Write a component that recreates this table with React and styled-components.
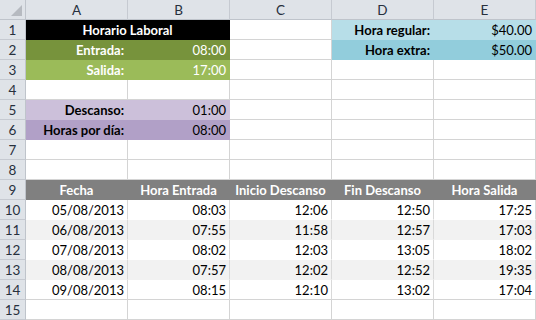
import styled, { createGlobalStyle } from "styled-components";

const GRID = '#d4d4d4';

const GlobalStyle = createGlobalStyle`
    html, body {
        margin: 0;
        padding: 0;
        background: #ffffff;
    }
    body {
        font-family: "Lato", "Open Sans", sans-serif;
        font-size: 13px;
        color: #000000;
    }
`;

const Sheet = styled.div`
    width: 536px;
    height: 320px;
    overflow: hidden;
    display: grid;
    grid-template-columns: 26px repeat(5, 102px);
    grid-auto-rows: 20px;
`;

const Corner = styled.div`
    position: relative;
    background: #dfe3e8;
    border-right: 1px solid #bfc4cb;
    border-bottom: 1px solid #bfc4cb;

    &::after{
        content: '';
        position: absolute;
        right: 3px;
        bottom: 3px;
        width: 0;
        height: 0;
        border-left: 11px solid transparent;
        border-bottom: 11px solid #b6bac0;
    }
`;

const ColHead = styled.div`
    display: flex;
    justify-content: center;
    align-items: center;
    background: #dfe3e8;
    border-right: 1px solid #c6cad1;
    border-bottom: 1px solid #bfc4cb;
    color: #27303d;
    font-size: 13.5px;
`;

const RowHead = styled.div`
    display: flex;
    justify-content: center;
    align-items: center;
    background: #dfe3e8;
    border-right: 1px solid #bfc4cb;
    border-bottom: 1px solid #c6cad1;
    color: #27303d;
    font-size: 13.5px;
`;

const Cell = styled.div`
    display: flex;
    align-items: center;
    justify-content: ${({ $align })=> $align === 'center' ? 'center' : $align === 'left' ? 'flex-start' : 'flex-end'};
    grid-column: span ${({ $span })=> $span || 1};
    padding: 0 3px;
    white-space: nowrap;
    overflow: hidden;
    background: ${({ $bg })=> $bg || '#ffffff'};
    color: ${({ $color })=> $color || '#000000'};
    font-weight: ${({ $bold })=> $bold ? 700 : 400};
    border-right: 1px solid ${({ $vline, $bg })=> $vline || $bg || GRID};
    border-bottom: 1px solid ${({ $hline, $bg })=> $hline || $bg || GRID};
`;

const COLS = ['A', 'B', 'C', 'D', 'E'];

const BLACK = '#000000';
const GREEN_DARK = '#77933c';
const GREEN = '#9bbb59';
const LILAC = '#ccc0da';
const PURPLE = '#b1a0c7';
const SKY = '#b7dee8';
const TEAL = '#92cddc';
const HEAD = '#808080';
const STRIPE = '#f2f2f2';

const entries = [
    ['05/08/2013', '08:03', '12:06', '12:50', '17:25'],
    ['06/08/2013', '07:55', '11:58', '12:57', '17:03'],
    ['07/08/2013', '08:02', '12:03', '13:05', '18:02'],
    ['08/08/2013', '07:57', '12:02', '12:52', '19:35'],
    ['09/08/2013', '08:15', '12:10', '13:02', '17:04'],
];

const headings = ['Fecha', 'Hora Entrada', 'Inicio Descanso', 'Fin Descanso', 'Hora Salida'];

function Blank({ n }){
    return Array.from({ length: n }, (_, i)=> <Cell key={ 'b' + i } />);
}

function App(){
    return(
        <>
            <GlobalStyle />
            <Sheet>
                <Corner />
                { COLS.map(c => <ColHead key={ c }>{ c }</ColHead>) }

                <RowHead>1</RowHead>
                <Cell $span={ 2 } $bg={ BLACK } $color="#ffffff" $bold $align="center">Horario Laboral</Cell>
                <Cell />
                <Cell $bg={ SKY } $bold>Hora regular:</Cell>
                <Cell $bg={ SKY }>$40.00</Cell>

                <RowHead>2</RowHead>
                <Cell $bg={ GREEN_DARK } $color="#ffffff" $bold>Entrada:</Cell>
                <Cell $bg={ GREEN_DARK } $color="#ffffff">08:00</Cell>
                <Cell />
                <Cell $bg={ TEAL } $bold>Hora extra:</Cell>
                <Cell $bg={ TEAL }>$50.00</Cell>

                <RowHead>3</RowHead>
                <Cell $bg={ GREEN } $color="#ffffff" $bold>Salida:</Cell>
                <Cell $bg={ GREEN } $color="#ffffff">17:00</Cell>
                <Blank n={ 3 } />

                <RowHead>4</RowHead>
                <Blank n={ 5 } />

                <RowHead>5</RowHead>
                <Cell $bg={ LILAC } $bold>Descanso:</Cell>
                <Cell $bg={ LILAC }>01:00</Cell>
                <Blank n={ 3 } />

                <RowHead>6</RowHead>
                <Cell $bg={ PURPLE } $bold>Horas por día:</Cell>
                <Cell $bg={ PURPLE }>08:00</Cell>
                <Blank n={ 3 } />

                <RowHead>7</RowHead>
                <Blank n={ 5 } />

                <RowHead>8</RowHead>
                <Blank n={ 5 } />

                <RowHead>9</RowHead>
                { headings.map(h => (
                    <Cell key={ h } $bg={ HEAD } $color="#ffffff" $bold $align="center">{ h }</Cell>
                )) }

                { entries.map((row, i)=>{
                    const bg = i % 2 === 1 ? STRIPE : '#ffffff';
                    const last = i === entries.length - 1;
                    return [
                        <RowHead key={ 'h' + i }>{ 10 + i }</RowHead>,
                        ...row.map((v, j)=> (
                            <Cell key={ i + '-' + j } $bg={ bg } $vline="#d9d9d9" $hline={ last ? GRID : bg }>{ v }</Cell>
                        ))
                    ];
                }) }

                <RowHead>15</RowHead>
                <Blank n={ 5 } />
            </Sheet>
        </>
    );
}

export default App;
